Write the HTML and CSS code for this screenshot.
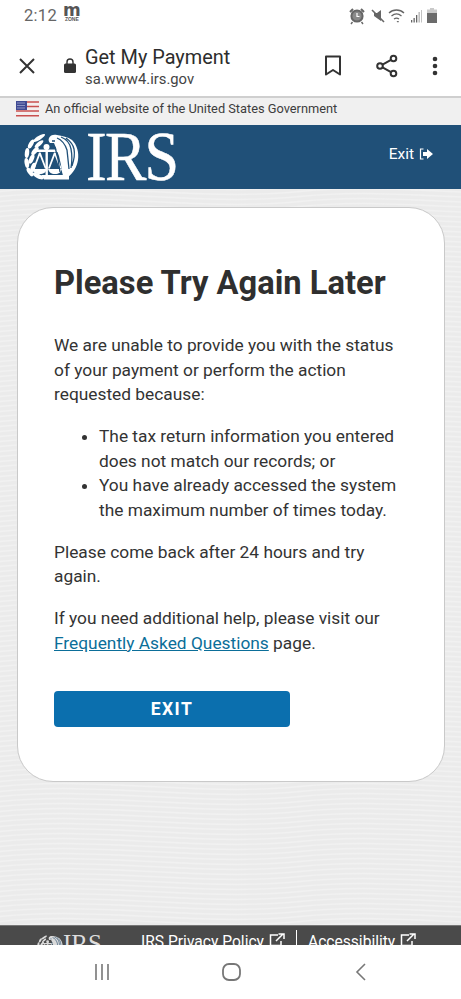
FILE: index.html
```html
<!DOCTYPE html>
<html lang="en">
<head>
<meta charset="utf-8">
<title>Get My Payment</title>
<link rel="stylesheet" href="styles.css">
</head>
<body>
<svg class="defs" width="0" height="0" aria-hidden="true">
  <symbol id="seal" viewBox="0 0 55 48">
    <g fill="#fff">
      <ellipse cx="15" cy="5" rx="7" ry="2" transform="rotate(-32 15 5)"/>
      <ellipse cx="15" cy="11" rx="5.500" ry="2" transform="rotate(-40 15 11)"/>
      <ellipse cx="7" cy="11" rx="5" ry="2.200" transform="rotate(-62 7 11)"/>
      <ellipse cx="11" cy="18" rx="5" ry="2.200" transform="rotate(-50 11 18)"/>
      <ellipse cx="3" cy="20" rx="5" ry="2.200" transform="rotate(-84 3 20)"/>
      <ellipse cx="7.500" cy="26" rx="5" ry="2.200" transform="rotate(-65 7.500 26)"/>
      <ellipse cx="2.800" cy="30" rx="5" ry="2.200" transform="rotate(80 2.800 30)"/>
      <ellipse cx="9" cy="34.500" rx="5" ry="2.200" transform="rotate(-70 9 34.500)"/>
      <ellipse cx="6" cy="39" rx="5" ry="2.200" transform="rotate(55 6 39)"/>
      <ellipse cx="14" cy="43" rx="6" ry="2.200" transform="rotate(28 14 43)"/>
      <path d="M33 2c-3-1-7 0-8 3-1 2 0 4 1 5h4l2 5 3 8 2 9 1 7 2 7 4-2c5-4 9-10 10-17 1-8-1-15-6-20-4-3-10-4-15-5z"/>
      <rect x="21.500" y="15" width="2.400" height="27"/>
      <path d="M13 16.500h21l2 2.500H13z"/>
      <circle cx="22.500" cy="14" r="3"/>
      <path d="M15 19.500l-6 16h1.800l5-13 5 13h1.800l-6-16zM30 19.500l-6 16h1.800l5-13 5 13h1.800l-6-16z"/>
      <path d="M8 36h15c-1 3-3 5-7.500 5S9 39 8 36zM24 36h14c-1 3-3 5-7 5s-6-2-7-5z"/>
      <path d="M17 42h28v4.500H20z"/>
    </g>
    <g fill="none" stroke="#205078" stroke-width="1.300">
      <path d="M33 5c5 2 8 6 10 12l2 19M37 4c5 2 9 6 10 12 1 5 1 13 0 19M42 5c4 3 7 6 8 11 1 5 0 11-2 17"/>
      <path d="M31 14l3 12 2 13M28 8h3"/>
    </g>
  </symbol>
</svg>
<div class="screen">
  <div class="status">
    <div class="status-left">
      <span class="time">2:12</span>
      <span class="mzone"><b>m</b><i>ZONE</i></span>
    </div>
    <svg class="status-icons" width="76" height="20" viewBox="0 0 76 20">
      <g fill="#666" stroke="#666">
        <circle cx="9" cy="10" r="5.600" fill="#8a8a8a" stroke-width="2"/>
        <path d="M9 7v3.500h2.500" fill="none" stroke="#fff" stroke-width="1.200"/>
        <path d="M2 6l3-3M16 6l-3-3" stroke-width="2" fill="none"/>
        <path d="M4.500 16l-1.500 2M13.500 16l1.500 2" stroke-width="1.400" fill="none"/>
        <path d="M26 7h3l4-3v11l-7-5z" stroke="none"/>
        <path d="M24 4l12 12" stroke-width="1.600" fill="none"/>
        <path d="M41 7c4-4 11-4 15 0M43.500 10c3-2.500 7-2.500 10 0M46 13c1.500-1 3.500-1 5 0" fill="none" stroke-width="1.300"/>
        <path d="M48.500 15l1.500 1.800 1-1.800z" stroke="none"/>
      </g>
      <g fill="#666">
        <rect x="63" y="14" width="1.300" height="2.500"/>
        <rect x="65.500" y="12" width="1.300" height="4.500"/>
        <rect x="68" y="9" width="1.300" height="7.500"/>
        <rect x="70.500" y="6" width="1.300" height="10.500" opacity=".5"/>
        <rect x="73" y="4" width="1" height="12.500" opacity=".4"/>
      </g>
    </svg>
    <svg class="battery" width="10" height="15" viewBox="0 0 10 15">
      <path d="M3 0h4v1.500h3V15H0V1.500h3z" fill="#c9c9c9"/>
      <rect y="5" width="10" height="10" fill="#6b6b6b"/>
    </svg>
  </div>

  <div class="toolbar">
    <svg class="tb-close" width="18" height="18" viewBox="0 0 18 18"><path d="M2 2l14 14M16 2L2 16" stroke="#333" stroke-width="2" fill="none"/></svg>
    <svg class="tb-lock" width="12" height="15" viewBox="0 0 12 15"><path d="M3 6V4a3 3 0 0 1 6 0v2" fill="none" stroke="#333" stroke-width="1.400"/><rect y="5.500" width="12" height="9.500" rx="1.500" fill="#333"/></svg>
    <div class="tb-title">
      <div class="tb-name">Get My Payment</div>
      <div class="tb-url">sa.www4.irs.gov</div>
    </div>
    <svg class="tb-book" width="18" height="21" viewBox="0 0 18 21"><path d="M2 1.500h14v18l-7-4.500-7 4.500z" fill="none" stroke="#333" stroke-width="2" stroke-linejoin="round"/></svg>
    <svg class="tb-share" width="22" height="24" viewBox="0 0 22 24"><g fill="none" stroke="#333" stroke-width="2"><circle cx="17.500" cy="4.500" r="2.800"/><circle cx="4" cy="12" r="2.800"/><circle cx="17.500" cy="19.500" r="2.800"/><path d="M6.500 10.600l8.500-4.700M6.500 13.400l8.500 4.700"/></g></svg>
    <svg class="tb-more" width="6" height="20" viewBox="0 0 6 20"><circle cx="3" cy="3" r="2.300" fill="#333"/><circle cx="3" cy="10" r="2.300" fill="#333"/><circle cx="3" cy="17" r="2.300" fill="#333"/></svg>
  </div>

  <div class="gov">
    <svg class="flag" width="23" height="16" viewBox="0 0 23 16">
      <rect width="23" height="16" fill="#f4eeee"/>
      <path d="M0 1h23M0 5.500h23M0 10h23M0 14.800h23" stroke="#c8504f" stroke-width="1.600"/>
      <rect width="11" height="9" fill="#3f4a93"/>
      <path d="M1.500 2h8M1.500 4.500h8M1.500 7h8" stroke="#d8dcf0" stroke-width="1" stroke-dasharray="1 1"/>
    </svg>
    <span>An official website of the United States Government</span>
  </div>

  <header class="irs-head">
    <div class="logo">
      <svg class="seal"><use href="#seal"/></svg>
      <span class="irs-word">IRS</span>
    </div>
    <a class="irs-exit">Exit
      <svg width="14" height="12" viewBox="0 0 14 12"><path d="M4.500 1H1.500v10h3" fill="none" stroke="#fff" stroke-width="1.200"/><path d="M4 4h4V1l6 5-6 5V8H4z" fill="#fff"/></svg>
    </a>
  </header>

  <main class="page">
    <section class="card">
      <h1>Please Try Again Later</h1>
      <p>We are unable to provide you with the status of your payment or perform the action requested because:</p>
      <ul>
        <li>The tax return information you entered does not match our records; or</li>
        <li>You have already accessed the system the maximum number of times today.</li>
      </ul>
      <p>Please come back after 24 hours and try again.</p>
      <p>If you need additional help, please visit our <a class="faq">Frequently Asked Questions</a> page.</p>
      <button class="exit-btn">EXIT</button>
    </section>
  </main>

  <footer class="foot">
    <div class="foot-logo">
      <svg class="foot-seal"><use href="#seal"/></svg>
      <span class="foot-word">IRS</span>
    </div>
    <div class="foot-links">
      <span class="foot-link">IRS Privacy Policy
        <svg width="16" height="14" viewBox="0 0 16 14"><path d="M9 2H1.500v10.500H12V8M7 8l7-7M9.500 1H15v5" fill="none" stroke="#fff" stroke-width="1.500"/></svg>
      </span>
      <span class="foot-sep"></span>
      <span class="foot-link">Accessibility
        <svg width="16" height="14" viewBox="0 0 16 14"><path d="M9 2H1.500v10.500H12V8M7 8l7-7M9.500 1H15v5" fill="none" stroke="#fff" stroke-width="1.500"/></svg>
      </span>
    </div>
  </footer>

  <nav class="navbar">
    <svg width="16" height="16" viewBox="0 0 16 16"><path d="M2 0v16M8 0v16M14 0v16" stroke="#777" stroke-width="1.600"/></svg>
    <svg class="nav-home" width="19" height="18" viewBox="0 0 19 18"><rect x="1" y="1" width="17" height="16" rx="6" fill="none" stroke="#777" stroke-width="1.800"/></svg>
    <svg width="11" height="18" viewBox="0 0 11 18"><path d="M10 1L2 9l8 8" fill="none" stroke="#777" stroke-width="1.600"/></svg>
  </nav>
</div>
</body>
</html>
```
FILE: styles.css
```css
* { box-sizing: border-box; }
html, body { margin: 0; padding: 0; }
body { font-family: Roboto, "Liberation Sans", sans-serif; background: #fff; }
.defs { position: absolute; }
.screen { width: 461px; height: 999px; overflow: hidden; display: flex; flex-direction: column; }

.status { height: 33px; flex: none; display: flex; align-items: center; padding: 0 24px 2px 24px; }
.status-left { display: flex; align-items: center; gap: 6px; flex: 1; }
.time { font-size: 16.500px; color: #666; letter-spacing: .3px; }
.mzone { display: flex; flex-direction: column; align-items: center; line-height: 1; color: #555; margin-top: -4px; }
.mzone b { font: 900 17px/11px "DejaVu Sans", sans-serif; }
.mzone i { font: 700 5px/6px "Liberation Sans", sans-serif; }
.status-icons { display: block; }
.battery { display: block; margin-left: 3px; }

.toolbar { height: 65px; flex: none; display: flex; align-items: center; border-bottom: 2px solid #cfcfcf; background: #fff; padding: 2px 23px 0 18px; }
.tb-close { margin-right: 28px; }
.tb-lock { margin-right: 9px; }
.tb-title { flex: 1; padding-top: 3px; }
.tb-name { font-size: 19.900px; line-height: 24px; color: #2d2d2d; }
.tb-url { font-size: 14.800px; line-height: 19px; color: #444; }
.tb-book { margin-right: 34px; }
.tb-share { margin-right: 34px; }

.gov { height: 27px; flex: none; display: flex; align-items: center; gap: 6px; background: #f0f0f0; padding: 0 0 6px 16px; font-size: 12.800px; color: #3d3d3d; }

.irs-head { height: 64px; flex: none; display: flex; align-items: center; justify-content: space-between; background: #205078; padding: 0 28px 0 24px; }
.logo { display: flex; align-items: center; gap: 7px; }
.seal { display: block; width: 55px; height: 48px; }
.irs-word { font: 400 69px/50px "Liberation Serif", serif; color: #fff; letter-spacing: -2px; -webkit-text-stroke: .5px #fff; transform: scaleX(.9); transform-origin: left center; }
.irs-exit { display: flex; align-items: center; gap: 5px; color: #fff; font-size: 15.500px; padding-bottom: 7px; }

.page { flex: 1; min-height: 0; padding: 18px 16px 0 17px; background-color: #ebebeb; background-image: url("data:image/svg+xml,%3Csvg xmlns='http://www.w3.org/2000/svg' width='300' height='5'%3E%3Cg fill='none' stroke='%23f1f1f1' stroke-width='1.500'%3E%3Cpath d='M0-2.500C100-12.500 200 7.500 300-2.500'/%3E%3Cpath d='M0 2.500C100-7.500 200 12.500 300 2.500'/%3E%3Cpath d='M0 7.500C100-2.500 200 17.500 300 7.500'/%3E%3C/g%3E%3C/svg%3E"); }
.card { height: 575px; background: #fff; border: 1px solid #c9c9c9; border-radius: 36px; padding: 56px 36px 0; color: #333; font-size: 17.330px; line-height: 24.500px; }
.card h1 { margin: 0 0 31px; font-size: 32.700px; line-height: 38px; font-weight: 700; color: #2f2f2f; }
.card p { margin: 0 0 17.500px; }
.card ul { margin: 0 0 17.500px; padding-left: 45px; }
.faq { color: #0b6e99; text-decoration: underline; }
.exit-btn { display: block; width: 236px; height: 36px; margin-top: 36px; border: 0; border-radius: 4px; background: #0b6fae; color: #fff; font: 700 17.500px Roboto, sans-serif; letter-spacing: 1.500px; }

.foot { height: 20px; flex: none; overflow: hidden; display: flex; background: #4a4a4a; border-top: 1px solid #777; color: #fff; padding: 4px 0 0 37px; font-size: 15.600px; line-height: 24px; }
.foot-logo { width: 104px; display: flex; align-items: flex-start; gap: 0; padding-top: 5px; }
.foot-seal { display: block; width: 26px; height: 23px; opacity: .8; }
.foot-word { font: 400 25px/24px "Liberation Serif", serif; color: #ddd; margin-top: -3px; }
.foot-links { display: flex; gap: 11px; }
.foot-link { display: flex; align-items: flex-start; gap: 5px; white-space: nowrap; }
.foot-link svg { margin-top: 3px; }
.foot-sep { width: 1px; height: 18px; background: #fff; }

.navbar { height: 54px; flex: none; display: flex; align-items: center; background: #fff; padding: 0 95px 0 94px; justify-content: space-between; }
.nav-home { margin-right: 2px; }
```
